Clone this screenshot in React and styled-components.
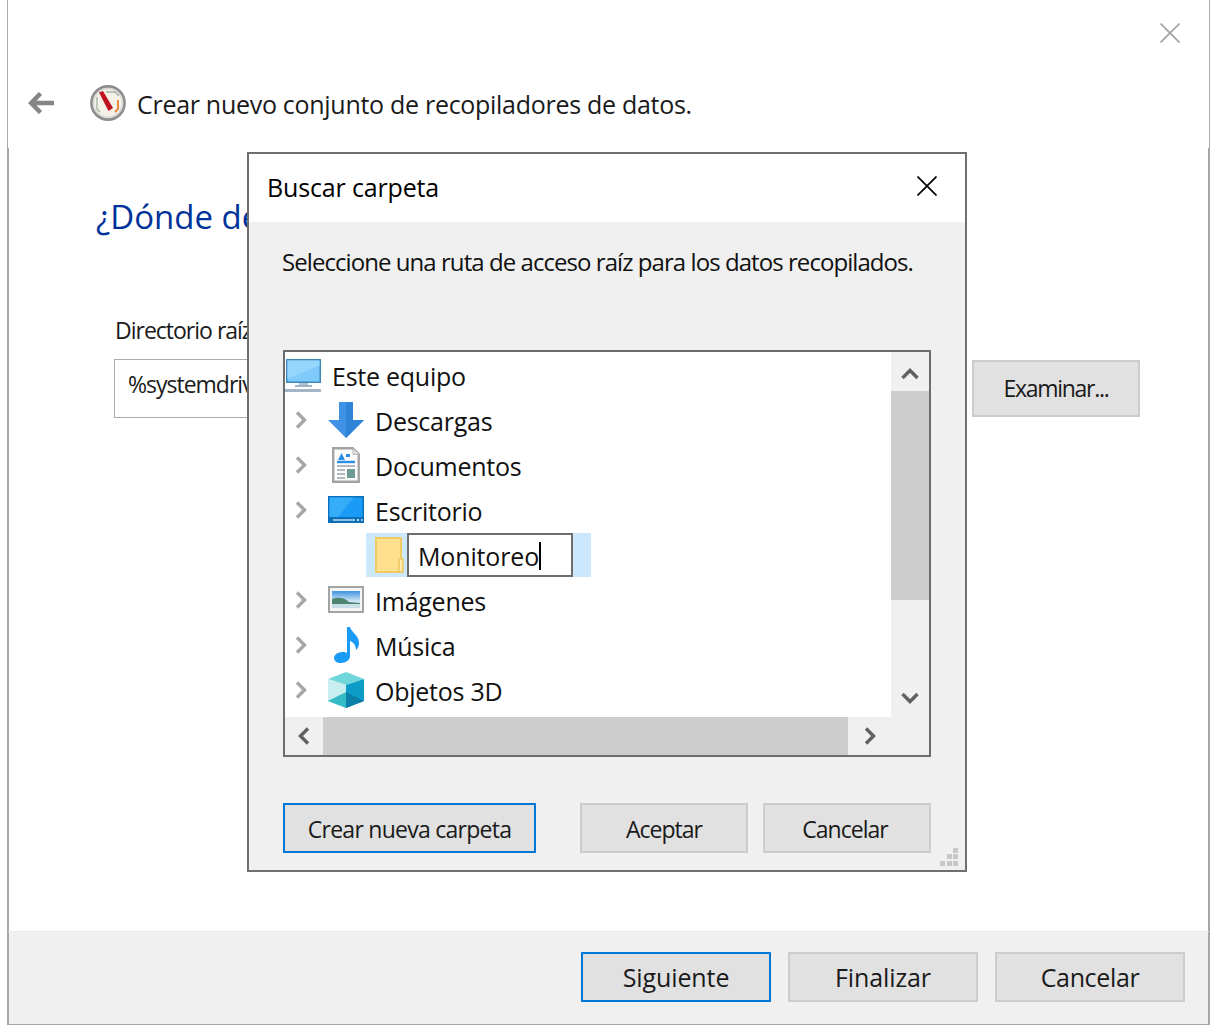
import styled, { createGlobalStyle } from "styled-components";

const GlobalStyle = createGlobalStyle`
  * { box-sizing: border-box; }
  html, body { margin: 0; padding: 0; background: #fff; }
  body { font-family: "Open Sans", "Noto Sans", sans-serif; color: #000; }
`;

// Outer wizard window
const Shell = styled.div`
  position: relative;
  display: flex;
  flex-direction: column;
  width: 1203px;
  height: 1025px;
  margin-left: 7px;
  overflow: hidden;
`;

const Header = styled.header`
  display: flex;
  flex-direction: column;
  height: 148px;
  border-left: 1px solid #ababab;
  border-right: 1px solid #ababab;
  padding: 23px 29px 0 20px;
`;

const CloseRow = styled.div`
  display: flex;
  justify-content: flex-end;
  height: 22px;
`;

const TitleRow = styled.div`
  display: flex;
  align-items: center;
  height: 40px;
  margin-top: 38px;
`;

const GaugeSlot = styled.span`
  display: flex;
  margin-left: 36px;
`;

const TitleText = styled.span`
  margin: 2px 0 0 11px;
  font-size: 25px;
  letter-spacing: -0.29px;
  color: #1a1a1a;
  white-space: nowrap;
`;

const Body = styled.main`
  flex: 1;
  border-left: 2px solid #a6a6a6;
  border-right: 2px solid #a6a6a6;
  padding: 45px 0 0 87px;
`;

const Heading = styled.h1`
  margin: 0;
  font-size: 33px;
  font-weight: 400;
  line-height: 48px;
  color: #003399;
  white-space: nowrap;
`;

const FieldLabel = styled.div`
  margin: 73px 0 0 19px;
  font-size: 23px;
  line-height: 32px;
  letter-spacing: -1px;
  color: #1a1a1a;
  white-space: nowrap;
`;

const PathRow = styled.div`
  display: flex;
  align-items: flex-start;
  margin: 13px 0 0 18px;
`;

const PathInput = styled.div`
  display: flex;
  align-items: center;
  width: 800px;
  height: 59px;
  padding: 0 0 10px 13px;
  background: #fff;
  border: 1px solid #ababab;
  font-size: 23px;
  letter-spacing: -1px;
  color: #1a1a1a;
`;

const Button = styled.button`
  display: flex;
  align-items: center;
  justify-content: center;
  width: ${(p) => p.$width || 168}px;
  height: ${(p) => p.$height || 50}px;
  margin: 0;
  padding: 0;
  background: #e1e1e1;
  border: ${(p) => (p.$primary ? "2px solid #0078d7" : "2px solid #cccccc")};
  border-radius: 0;
  font-family: inherit;
  font-size: ${(p) => p.$size || 23}px;
  letter-spacing: ${(p) => p.$tracking ?? -1}px;
  color: #1a1a1a;
  white-space: nowrap;
`;

const BrowseButton = styled(Button)`
  margin: 1px 0 0 58px;
  padding-bottom: 2px;
`;

const Footer = styled.footer`
  display: flex;
  align-items: flex-start;
  justify-content: flex-end;
  gap: 17px;
  height: 94px;
  padding: 20px 23px 0 0;
  background: #f0f0f0;
  border-top: 1px solid #e8e8e8;
  border-left: 2px solid #a6a6a6;
  border-right: 2px solid #a6a6a6;
  border-bottom: 1px solid #a6a6a6;
`;

// Folder picker, sits over the wizard
const Dialog = styled.section`
  position: absolute;
  left: 240px;
  top: 152px;
  display: flex;
  flex-direction: column;
  width: 720px;
  height: 720px;
  background: #f0f0f0;
  border: 2px solid #6f6f6f;
`;

const DialogTitleBar = styled.div`
  display: flex;
  align-items: center;
  justify-content: space-between;
  height: 68px;
  padding: 0 28px 4px 18px;
  background: #fff;
`;

const DialogTitle = styled.span`
  margin-top: 2px;
  font-size: 25px;
  letter-spacing: -0.15px;
  color: #000;
`;

const Message = styled.p`
  margin: 23px 0 0 33px;
  font-size: 24px;
  line-height: 34px;
  letter-spacing: -0.94px;
  color: #111;
  white-space: nowrap;
`;

const TreeBox = styled.div`
  display: grid;
  grid-template-columns: 1fr 38px;
  grid-template-rows: 365px 38px;
  width: 648px;
  height: 407px;
  margin: 71px 0 0 34px;
  background: #f0f0f0;
  border: 2px solid #6d6d6d;
`;

const TreeList = styled.div`
  display: flex;
  flex-direction: column;
  background: #fff;
  overflow: hidden;
`;

const Row = styled.div`
  display: flex;
  align-items: center;
  flex: none;
  height: 45px;
`;

const ChevronSlot = styled.span`
  display: flex;
  align-items: center;
  justify-content: center;
  flex: none;
  width: 43px;
  padding-right: 12px;
`;

const IconSlot = styled.span`
  display: flex;
  align-items: center;
  justify-content: center;
  flex: none;
  width: 36px;
  margin-top: ${(p) => p.$drop || 0}px;
  margin-right: 11px;
`;

const RowLabel = styled.span`
  margin-top: 2px;
  font-size: 25px;
  letter-spacing: -0.25px;
  color: #111;
  white-space: nowrap;
`;

const EditRow = styled.div`
  display: flex;
  align-items: center;
  width: 225px;
  height: 44px;
  margin-left: 81px;
  padding-left: 9px;
  background: #cce8ff;
`;

const RenameBox = styled.div`
  display: flex;
  align-items: center;
  width: 166px;
  height: 44px;
  margin-left: 3px;
  padding: 2px 0 0 9px;
  background: #fff;
  border: 2px solid #6d6d6d;
  font-size: 25px;
  letter-spacing: -0.15px;
  color: #111;
`;

const Caret = styled.span`
  display: inline-block;
  width: 2px;
  height: 28px;
  background: #000;
`;

const VTrack = styled.div`
  display: flex;
  flex-direction: column;
  background: #f0f0f0;
`;

const ArrowCell = styled.div`
  display: flex;
  align-items: center;
  justify-content: center;
  flex: ${(p) => (p.$grow ? 1 : "none")};
  width: ${(p) => (p.$grow ? "auto" : "38px")};
  height: ${(p) => p.$height || 38}px;
  padding-top: ${(p) => p.$nudge || 0}px;
`;

const VThumb = styled.div`
  flex: none;
  height: 209px;
  background: #cdcdcd;
`;

const Spacer = styled.div`
  flex: 1;
`;

const HTrack = styled.div`
  display: flex;
  background: #f0f0f0;
`;

const HThumb = styled.div`
  flex: none;
  width: 525px;
  background: #cdcdcd;
`;

const Corner = styled.div`
  background: #f0f0f0;
`;

const DialogActions = styled.div`
  display: flex;
  align-items: flex-start;
  margin: 46px 0 0 34px;

  button {
    padding-top: 2px;
  }
`;

const CreateButton = styled(Button)`
  margin-right: 44px;
`;

const CancelButton = styled(Button)`
  margin-left: 15px;
  padding-right: 4px;
`;

const Grip = styled.svg`
  position: absolute;
  right: 7px;
  bottom: 4px;
`;

const Close = ({ size, color, width }) => (
  <svg width={size} height={size} viewBox="0 0 20 20" fill="none" stroke={color} strokeWidth={width}>
    <path d="M0.5 0.5 19.5 19.5M19.5 0.5 0.5 19.5" />
  </svg>
);

const BackArrow = () => (
  <svg width="26" height="22" viewBox="0 0 26 22" fill="none" stroke="#858585" strokeWidth="4.5">
    <path d="M26 11H4M12.5 1.5 3.2 11l9.3 9.5" />
  </svg>
);

const GaugeIcon = () => (
  <svg width="36" height="36" viewBox="0 0 36 36">
    <circle cx="18" cy="18" r="16.6" fill="#f5f1e9" stroke="#8d8d8d" strokeWidth="2.6" />
    <circle cx="18" cy="18" r="14.4" fill="none" stroke="#d2d2d2" strokeWidth="1.2" />
    <path d="M16 7h9l4 4M7 12v12l3 3" fill="none" stroke="#a5b5a5" strokeWidth="1.4" />
    <path d="M28 15v9l-3 3" fill="none" stroke="#ea7f2e" strokeWidth="1.8" />
    <path d="M9 7.500 13 6l10 17-4.500 3z" fill="#c1121f" />
  </svg>
);

const Chevron = ({ dir = "right", color = "#a6a6a6" }) => {
  const paths = {
    right: "M2 1.5 9.5 9 2 16.5",
    left: "M10 1.5 2.5 9l7.5 7.5",
    up: "M1.5 10 9 2.5l7.5 7.5",
    down: "M1.5 2 9 9.5 16.5 2",
  };
  const flat = dir === "up" || dir === "down";
  return (
    <svg width={flat ? 18 : 12} height={flat ? 12 : 18} viewBox={flat ? "0 0 18 12" : "0 0 12 18"} fill="none" stroke={color} strokeWidth="3.4">
      <path d={paths[dir]} />
    </svg>
  );
};

const PcIcon = () => (
  <svg width="36" height="33" viewBox="0 0 36 33">
    <rect x="1" y="0" width="35" height="24" fill="#3d88b8" />
    <rect x="2.5" y="1.5" width="32" height="21" fill="#7ecbfb" />
    <path d="M2.5 1.5h32v5L2.5 20z" fill="#95d6fd" />
    <rect x="14" y="24" width="9" height="3" fill="#a9c3d6" />
    <rect x="10" y="26" width="17" height="2" fill="#9fb3c4" />
    <rect x="0" y="30" width="36" height="3" fill="#a5b4c6" />
  </svg>
);

const DownloadIcon = () => (
  <svg width="36" height="36" viewBox="0 0 36 36">
    <path d="M11 0h14v18h11L18 36 0 18h11z" fill="#3f91e3" />
    <path d="M18 0h7v18h11L18 36z" fill="#2f84da" />
  </svg>
);

const DocIcon = () => (
  <svg width="28" height="36" viewBox="0 0 28 36">
    <path d="M1.200 1.200h19.500l6 6v27.600H1.200z" fill="#fcfcfc" stroke="#a3a3a3" strokeWidth="2.4" />
    <path d="M21 1.500v6h6" fill="#e4e4e4" stroke="#b8b8b8" />
    <path d="M6 13l3.500-7 3.500 7zM14 7h4v3h-4z" fill="#2a8de6" />
    <path d="M5 15h18" stroke="#2a8de6" strokeWidth="2.4" />
    <path d="M5 19h18M5 23h8M5 27h8M5 31h8" stroke="#9aa3ab" strokeWidth="1.6" />
    <rect x="15" y="22" width="8" height="9" fill="#6d9a94" />
  </svg>
);

const DesktopIcon = () => (
  <svg width="36" height="27" viewBox="0 0 36 27">
    <rect width="36" height="27" fill="#0a6fb8" />
    <path d="M1.5 1.5h33V21h-33z" fill="#1a9bf5" />
    <path d="M1.5 1.5h24L10 21H1.5z" fill="#36adf8" />
    <path d="M5 24h22" stroke="#e8f4fc" strokeWidth="1.2" />
    <path d="M29 24h2M33 24h1.500" stroke="#fff" strokeWidth="1.6" />
  </svg>
);

const FolderIcon = () => (
  <svg width="29" height="36" viewBox="0 0 29 36">
    <rect x="1" y="1" width="25" height="34" fill="#ffe08f" stroke="#f0cb62" strokeWidth="2" />
    <rect x="24" y="22" width="4" height="13" fill="#ffe9ad" stroke="#eec65d" strokeWidth="1.5" />
  </svg>
);

const PictureIcon = () => (
  <svg width="36" height="27" viewBox="0 0 36 27">
    <defs>
      <linearGradient id="sky" x1="0" y1="0" x2="0" y2="1">
        <stop offset="0" stopColor="#3f93e0" />
        <stop offset="0.6" stopColor="#cfe6f4" />
      </linearGradient>
    </defs>
    <rect x="1" y="1" width="34" height="25" fill="#f5f5f5" stroke="#a3a3a3" strokeWidth="2" />
    <rect x="4" y="5" width="28" height="17" fill="url(#sky)" />
    <path d="M4 13c6-2 12-2 17 3l11 1v2H4z" fill="#4d8571" />
    <path d="M4 18h28v4H4z" fill="#c8dde6" />
  </svg>
);

const MusicIcon = () => (
  <svg width="27" height="36" viewBox="0 0 27 36">
    <path d="M14 0h3c1 5 9 8 9 16 0 3-1 5-3 7 0-5-3-8-6-9v15c0 4-4 7-9 7-4 0-7-2-7-5 0-4 5-6 9-6 2 0 3 0 4 1z" fill="#1a9bf5" />
  </svg>
);

const CubeIcon = () => (
  <svg width="36" height="36" viewBox="0 0 36 36">
    <path d="M0 7 18 0l18 7-18 6z" fill="#6fd6dc" />
    <path d="M0 7l18 6v23L0 29z" fill="#c9eef0" />
    <path d="M36 7 18 13v23l18-7z" fill="#0b9cc7" />
    <path d="M0 29l18-9v16z" fill="#33bcc7" />
    <path d="M36 29l-18-9v16z" fill="#0a7fa8" />
  </svg>
);

const rows = [
  { label: "Descargas", icon: <DownloadIcon /> },
  { label: "Documentos", icon: <DocIcon /> },
  { label: "Escritorio", icon: <DesktopIcon /> },
  { edit: true },
  { label: "Imágenes", icon: <PictureIcon /> },
  { label: "Música", icon: <MusicIcon /> },
  { label: "Objetos 3D", icon: <CubeIcon /> },
];

function TreeRow({ row }) {
  if (row.edit) {
    return (
      <Row>
        <EditRow>
          <FolderIcon />
          <RenameBox>
            Monitoreo
            <Caret />
          </RenameBox>
        </EditRow>
      </Row>
    );
  }
  return (
    <Row>
      <ChevronSlot>
        <Chevron />
      </ChevronSlot>
      <IconSlot>{row.icon}</IconSlot>
      <RowLabel>{row.label}</RowLabel>
    </Row>
  );
}

export default function App() {
  return (
    <>
      <GlobalStyle />
      <Shell>
        <Header>
          <CloseRow>
            <Close size={20} color="#a3a3a3" width={1.7} />
          </CloseRow>
          <TitleRow>
            <BackArrow />
            <GaugeSlot>
              <GaugeIcon />
            </GaugeSlot>
            <TitleText>Crear nuevo conjunto de recopiladores de datos.</TitleText>
          </TitleRow>
        </Header>

        <Body>
          <Heading>¿Dónde de</Heading>
          <FieldLabel>Directorio raíz</FieldLabel>
          <PathRow>
            <PathInput>%systemdrive</PathInput>
            <BrowseButton $height={57} $tracking={-1.3}>Examinar...</BrowseButton>
          </PathRow>
        </Body>

        <Footer>
          <Button $width={190} $size={25} $tracking={-0.1} $primary>Siguiente</Button>
          <Button $width={190} $size={25} $tracking={-0.1}>Finalizar</Button>
          <Button $width={190} $size={25} $tracking={-0.35}>Cancelar</Button>
        </Footer>

        <Dialog>
          <DialogTitleBar>
            <DialogTitle>Buscar carpeta</DialogTitle>
            <Close size={20} color="#000" width={1.7} />
          </DialogTitleBar>
          <Message>Seleccione una ruta de acceso raíz para los datos recopilados.</Message>
          <TreeBox>
            <TreeList>
              <Row>
                <IconSlot $drop={2}><PcIcon /></IconSlot>
                <RowLabel>Este equipo</RowLabel>
              </Row>
              {rows.map((row, i) => (
                <TreeRow key={i} row={row} />
              ))}
            </TreeList>
            <VTrack>
              <ArrowCell $height={39} $nudge={4}><Chevron dir="up" color="#606060" /></ArrowCell>
              <VThumb />
              <Spacer />
              <ArrowCell><Chevron dir="down" color="#606060" /></ArrowCell>
            </VTrack>
            <HTrack>
              <ArrowCell><Chevron dir="left" color="#606060" /></ArrowCell>
              <HThumb />
              <ArrowCell $grow><Chevron dir="right" color="#606060" /></ArrowCell>
            </HTrack>
            <Corner />
          </TreeBox>
          <DialogActions>
            <CreateButton $width={253} $tracking={-0.74} $primary>Crear nueva carpeta</CreateButton>
            <Button>Aceptar</Button>
            <CancelButton>Cancelar</CancelButton>
          </DialogActions>
          <Grip width="18" height="18" viewBox="0 0 18 18" fill="#c8c8c8">
            <path d="M13 0h5v5h-5zM7 6h5v5H7zM13 6h5v5h-5zM0 13h5v5H0zM7 13h5v5H7zM13 13h5v5h-5z" />
          </Grip>
        </Dialog>
      </Shell>
    </>
  );
}
